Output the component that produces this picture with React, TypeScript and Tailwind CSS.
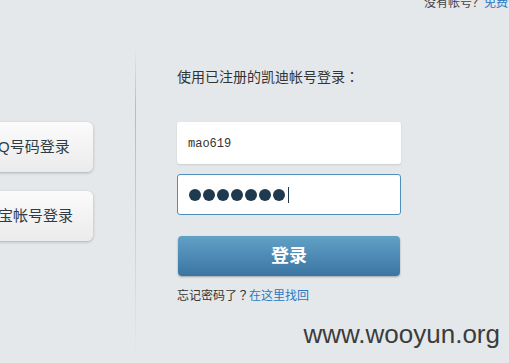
import React from 'react';

const cjk = "font-['Liberation_Sans','Noto_Sans_CJK_SC',sans-serif]";

const SideButton: React.FC<{ label: string }> = ({ label }) => (
  <div className="-ml-[37px] w-[130px] h-[50px] rounded-[6px] bg-gradient-to-b from-[#fbfbfb] to-[#ebebeb] shadow-[0_1px_3px_rgba(0,0,0,0.25)] flex items-center justify-center text-[15px] text-[#2f3b48] whitespace-nowrap">
    {label}
  </div>
);

const App: React.FC = () => {
  return (
    <div className={`relative w-[509px] h-[363px] overflow-hidden bg-[#e4e8eb] ${cjk}`}>
      {/* top link */}
      <div className="h-[10px] flex items-end pl-[424px] whitespace-nowrap text-[12px] leading-[13px] text-[#444]">
        <span>没有帐号？</span>
        <span className="text-[#2a78c0]">免费注册</span>
      </div>

      <div className="flex h-[353px]">
        {/* other login methods */}
        <div className="w-[135px] shrink-0 pt-[112px] flex flex-col gap-[19px]">
          <SideButton label="QQ号码登录" />
          <SideButton label="淘宝帐号登录" />
        </div>

        <div className="w-px mt-[36px] bg-gradient-to-b from-transparent via-[#a8bed3] via-20% to-transparent" />

        {/* login form */}
        <div className="pl-[41px] flex flex-col">
          <div className="mt-[57px] h-[20px] text-[14px] leading-[20px] text-[#333]">
            使用已注册的凯迪帐号登录<span className="leading-none font-['Noto_Sans_CJK_TC',sans-serif]">：</span>
          </div>

          <div className="mt-[35px] w-[224px] h-[42px] bg-white rounded-[3px] shadow-[0_1px_2px_rgba(0,0,0,0.12)] flex items-center pl-[11px] pt-px font-['Liberation_Mono',monospace] text-[12px] text-[#333]">
            mao619
          </div>

          <div className="mt-[10px] w-[224px] h-[41px] bg-white rounded-[3px] border border-[#4e8fbd] flex items-center pl-[11px] gap-[2px]">
            {[0, 1, 2, 3, 4, 5, 6].map((i) => (
              <span key={i} className="w-[12px] h-[12px] rounded-full bg-[#1f3a4f]" />
            ))}
            <span className="ml-[1px] w-px h-[16px] bg-[#1f3a4f]" />
          </div>

          <button className="mt-[21px] ml-px w-[222px] h-[40px] rounded-[4px] bg-gradient-to-b from-[#62a1c6] to-[#3a75a2] shadow-[0_1px_2px_rgba(0,0,0,0.3)] text-white text-[18px] font-bold">
            登录
          </button>

          <div className="mt-[12px] h-[16px] text-[12px] leading-[16px] text-[#333]">
            忘记密码了<span className="leading-none font-['Noto_Sans_CJK_TC',sans-serif]">？</span>
            <span className="text-[#2a78c0]">在这里找回</span>
          </div>
        </div>
      </div>

      {/* watermark */}
      <div className="absolute right-[9px] bottom-[14px] text-[26px] leading-[30px] text-[#3c3c3c] font-['Liberation_Sans',sans-serif]">
        www.wooyun.org
      </div>
    </div>
  );
};

export default App;
